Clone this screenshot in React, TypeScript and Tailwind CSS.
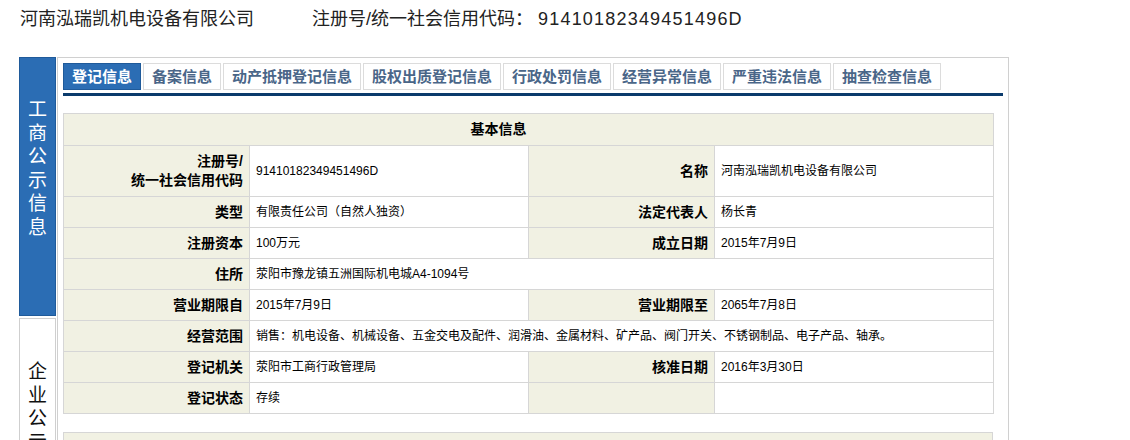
import React from "react";

const font = { fontFamily: '"Liberation Sans", "Noto Sans CJK SC", sans-serif' };

const tabs = ["登记信息", "备案信息", "动产抵押登记信息", "股权出质登记信息", "行政处罚信息", "经营异常信息", "严重违法信息", "抽查检查信息"];

function L({ children, h = "h-[31px]" }: { children?: React.ReactNode; h?: string }) {
  return (
    <td className={`${h} w-[186px] bg-[#f1f1e3] border border-[#d6d6d6] text-right pr-[6px] text-[14px] font-bold text-black leading-[19px] align-middle`}>
      {children}
    </td>
  );
}
function V({ children, span }: { children?: React.ReactNode; span?: number }) {
  return (
    <td colSpan={span} className="bg-white border border-[#d6d6d6] pl-[6px] text-[12px] text-black align-middle">
      {children}
    </td>
  );
}

export default function App() {
  return (
    <div className="w-[1130px] h-[440px] overflow-hidden bg-white text-black" style={font}>
      <div className="h-[57px] pl-[20px] pt-[8px] text-[18px] leading-[22px] text-[#222] flex">
        <span>河南泓瑞凯机电设备有限公司</span>
        <span className="ml-[58px]">
          注册号/统一社会信用代码： <span className="tracking-[1.2px]">91410182349451496D</span>
        </span>
      </div>
      <div className="flex pl-[19px]">
        <div className="w-[37px] mr-[1px] flex flex-col shrink-0">
          <div className="h-[259px] bg-[#2b6db4] border border-[#1f5a9a] flex flex-col items-center pt-[40px] text-white text-[19px] leading-[23.5px]">
            {"工商公示信息".split("").map((c, i) => (
              <span key={i}>{c}</span>
            ))}
          </div>
          <div className="mt-[2px] h-[200px] bg-white border border-[#cfcfcf] flex flex-col items-center pt-[41px] text-[#111] text-[19px] leading-[23.5px]">
            {"企业公示信息".split("").map((c, i) => (
              <span key={i}>{c}</span>
            ))}
          </div>
        </div>
        <div className="w-[952px] border border-[#d0d0d0] pl-[5px] pr-[5px] pt-[5px] h-[400px]">
          <div className="flex gap-[2px] h-[27px]">
            {tabs.map((t, i) => (
              <div
                key={t}
                className={`px-[8px] border text-[15px] font-bold leading-[25px] ${
                  i === 0 ? "bg-[#2b6db4] border-[#1f5a9a] text-white" : "bg-white border-[#dcdcdc] text-[#4a6688]"
                }`}
              >
                {t}
              </div>
            ))}
          </div>
          <div className="mt-[3px] h-[3px] bg-[#0b3b6c]" />
          <table className="mt-[17px] w-[930px] border-collapse table-fixed">
            <colgroup>
              <col className="w-[186px]" />
              <col className="w-[279px]" />
              <col className="w-[186px]" />
              <col className="w-[279px]" />
            </colgroup>
            <tbody>
              <tr>
                <td colSpan={4} className="h-[32px] bg-[#f1f1e3] border border-[#d6d6d6] text-center pr-[60px] text-[14px] font-bold">
                  基本信息
                </td>
              </tr>
              <tr>
                <L h="h-[51px]">
                  注册号/
                  <br />
                  统一社会信用代码
                </L>
                <V>91410182349451496D</V>
                <L>名称</L>
                <V>河南泓瑞凯机电设备有限公司</V>
              </tr>
              <tr>
                <L>类型</L>
                <V>有限责任公司（自然人独资）</V>
                <L>法定代表人</L>
                <V>杨长青</V>
              </tr>
              <tr>
                <L>注册资本</L>
                <V>100万元</V>
                <L>成立日期</L>
                <V>2015年7月9日</V>
              </tr>
              <tr>
                <L>住所</L>
                <V span={3}>荥阳市豫龙镇五洲国际机电城A4-1094号</V>
              </tr>
              <tr>
                <L>营业期限自</L>
                <V>2015年7月9日</V>
                <L>营业期限至</L>
                <V>2065年7月8日</V>
              </tr>
              <tr>
                <L>经营范围</L>
                <V span={3}>销售：机电设备、机械设备、五金交电及配件、润滑油、金属材料、矿产品、阀门开关、不锈钢制品、电子产品、轴承。</V>
              </tr>
              <tr>
                <L>登记机关</L>
                <V>荥阳市工商行政管理局</V>
                <L>核准日期</L>
                <V>2016年3月30日</V>
              </tr>
              <tr>
                <L>登记状态</L>
                <V>存续</V>
                <L></L>
                <V></V>
              </tr>
            </tbody>
          </table>
          <div className="mt-[18px] w-[930px] h-[40px] bg-[#f1f1e3] border border-[#d6d6d6]" />
        </div>
      </div>
    </div>
  );
}
